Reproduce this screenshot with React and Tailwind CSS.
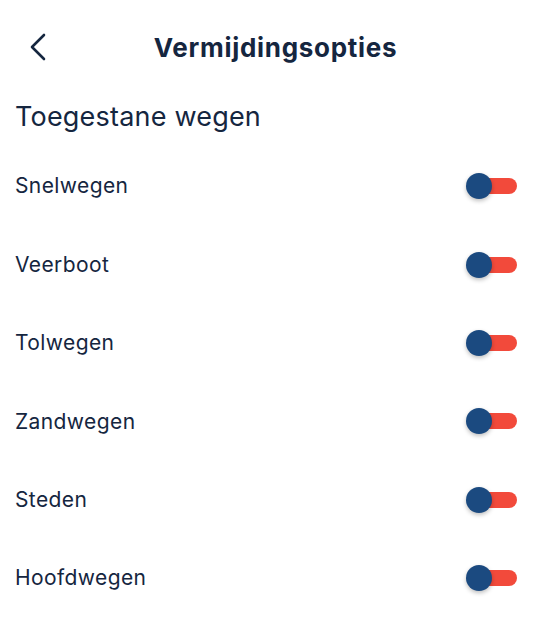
const options = ['Snelwegen', 'Veerboot', 'Tolwegen', 'Zandwegen', 'Steden', 'Hoofdwegen']

export default function App() {
  return (
    <div className="min-h-screen bg-white text-[#15263f]" style={{ fontFamily: 'Inter, "Noto Sans", sans-serif' }}>
      {/* Header */}
      <header className="h-[94px] grid grid-cols-[1fr_auto_1fr] items-center">
        <button className="pl-[29px] flex items-center text-[#15263f]" title="Terug">
          <svg width="18" height="28" viewBox="0 0 18 28" fill="none">
            <path d="M15 2 L3 14 L15 26" stroke="currentColor" strokeWidth="2.6" strokeLinecap="round" strokeLinejoin="round" />
          </svg>
        </button>
        <h1 className="text-[26px] font-bold tracking-[0.7px]">Vermijdingsopties</h1>
        <div />
      </header>

      {/* Section */}
      <h2 className="h-[46px] flex items-center px-[15px] text-[27px] font-normal tracking-[0.2px]">Toegestane wegen</h2>

      <div className="mt-[7px]">
        {options.map(o => (
          <div key={o} className="h-[78.4px] flex items-center justify-between pl-[15px] pr-[34px]">
            <span className="text-[21px] font-normal tracking-[0.4px]">{o}</span>
            <Toggle />
          </div>
        ))}
      </div>
    </div>
  )
}

function Toggle() {
  return (
    <div className="relative w-[51px] h-[26px]">
      <div className="absolute right-0 top-[5px] h-[16px] w-[40px] rounded-full bg-[#f24a3b]" />
      <div className="absolute left-0 top-0 w-[26px] h-[26px] rounded-full bg-[#1b4a80] shadow-[0_2px_4px_rgba(0,0,0,0.25)]" />
    </div>
  )
}
